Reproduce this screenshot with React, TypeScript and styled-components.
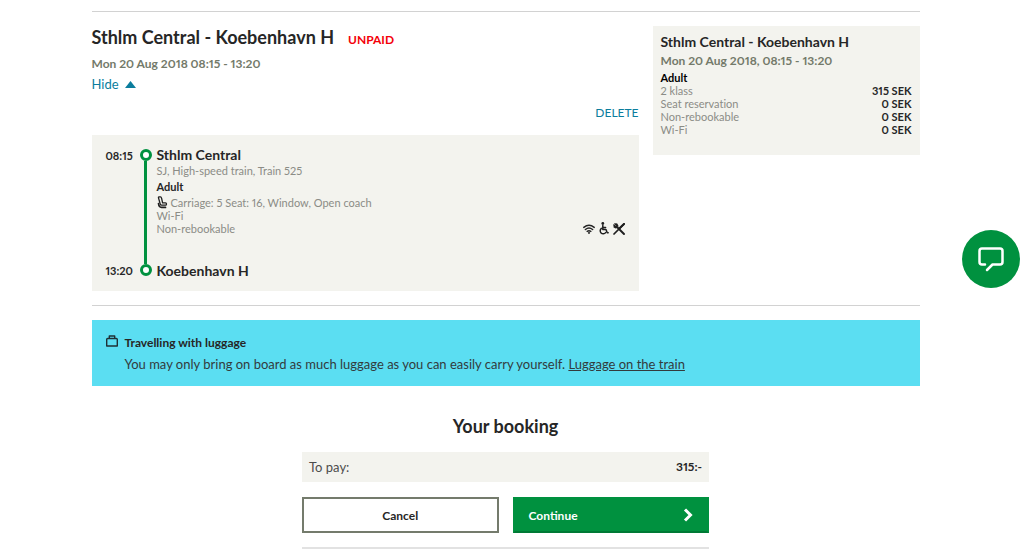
import React from 'react';
import styled, { createGlobalStyle } from 'styled-components';

const GlobalStyle = createGlobalStyle`
  *, *::before, *::after { box-sizing: border-box; }
  body {
    margin: 0;
    background: #fff;
    color: #262626;
    font-family: Lato, "Open Sans", sans-serif;
    font-size: 13px;
    line-height: 20px;
    font-variant-numeric: proportional-nums;
    font-variant-ligatures: none;
  }
  h1, h2, h3, p, dl, dd, dt { margin: 0; padding: 0; }
  button { font-family: inherit; cursor: pointer; }
`;

const Page = styled.div`
  padding: 11px 13px 0 0;
`;

const Container = styled.main`
  max-width: 828px;
  margin: 0 auto;
`;

const Rule = styled.hr<{ $soft?: boolean }>`
  height: ${(p) => (p.$soft ? 2 : 1)}px;
  margin: 0;
  border: 0;
  background: ${(p) => (p.$soft ? '#e2e2e2' : '#d2d2d2')};
`;

const Columns = styled.div`
  display: grid;
  grid-template-columns: minmax(0, 1fr) 267px;
  gap: 14px;
  align-items: start;
  padding: 14px 0;
`;

const TitleRow = styled.div`
  display: flex;
  align-items: baseline;
  gap: 14px;
  margin-bottom: 4px;
`;

const Title = styled.h1`
  font-size: 18px;
  line-height: 22px;
  font-weight: 700;
`;

const Unpaid = styled.strong`
  color: #f40009;
  font-size: 12px;
  font-weight: 700;
`;

const DateLine = styled.p`
  color: #737a6a;
  font-size: 12px;
  font-weight: 700;
`;

const LinkButton = styled.button<{ $small?: boolean }>`
  display: flex;
  align-items: center;
  gap: 6px;
  padding: 0;
  border: 0;
  background: none;
  color: #0b7d9d;
  font-size: ${(p) => (p.$small ? 12 : 13)}px;
  line-height: 20px;
`;

const Actions = styled.div`
  display: flex;
  justify-content: flex-end;
  margin: 9px 0 12px;
`;

const Journey = styled.section`
  display: grid;
  grid-template-columns: 29px 12px minmax(0, 1fr);
  column-gap: 5px;
  padding: 10px 14px 11px;
  background: #f3f3ee;
`;

const Time = styled.time<{ $end?: boolean }>`
  align-self: ${(p) => (p.$end ? 'end' : 'start')};
  grid-column: 1;
  grid-row: 1;
  padding-top: 2px;
  font-size: 11px;
  line-height: 18px;
  font-weight: 700;
`;

const Track = styled.div`
  display: flex;
  flex-direction: column;
  align-items: center;
  grid-column: 2;
  grid-row: 1;
  padding: 4px 0;
`;

const Stop = styled.span`
  width: 12px;
  height: 12px;
  border: 3px solid #00913f;
  border-radius: 50%;
  background: #fff;
`;

const Line = styled.span`
  flex: 1;
  width: 3px;
  background: #00913f;
`;

const Stops = styled.div`
  grid-column: 3;
  grid-row: 1;
`;

const Station = styled.h2`
  font-size: 14px;
  line-height: 19px;
  font-weight: 700;
`;

const Small = styled.p`
  display: flex;
  align-items: center;
  gap: 3px;
  color: #8b8c86;
  font-size: 11px;
  line-height: 13px;
`;

const Traveller = styled.h3`
  margin: 3px 0;
  font-size: 11px;
  line-height: 13px;
  font-weight: 700;
`;

const LastRow = styled.div`
  display: flex;
  justify-content: space-between;
  margin-bottom: 26px;
`;

const Facilities = styled.div`
  display: flex;
  align-items: center;
  gap: 4px;
  height: 13px;
`;

const Summary = styled.aside`
  padding: 6px 8px 19px;
  background: #f3f3ee;
`;

const PriceRow = styled.div`
  display: flex;
  justify-content: space-between;
  font-size: 11px;
  line-height: 13px;
  dt { color: #8b8c86; }
  dd { font-weight: 700; }
`;

const Passenger = styled.h3`
  color: #000;
  font-size: 11px;
  line-height: 13px;
`;

const Notice = styled.section`
  display: flex;
  gap: 7px;
  margin-top: 14px;
  padding: 13px 14px 12px;
  background: #5bdef2;
  > svg { margin-top: 2px; }
`;

const NoticeTitle = styled.h2`
  font-size: 12px;
  line-height: 20px;
`;

const NoticeText = styled.p`
  margin-top: 1px;
  color: #333b3d;
  a { color: inherit; }
`;

const Booking = styled.section`
  max-width: 407px;
  margin: 28px auto 0;
`;

const BookingTitle = styled.h2`
  font-size: 18px;
  line-height: 24px;
  text-align: center;
`;

const Total = styled.div`
  display: flex;
  justify-content: space-between;
  margin: 14px 0 15px;
  padding: 5px 7px;
  background: #f3f3ee;
  color: #4c4c4c;
  strong { color: #262626; font-size: 12px; }
`;

const Buttons = styled.div`
  display: grid;
  grid-template-columns: 1fr 1fr;
  gap: 14px;
  margin-bottom: 14px;
`;

const Button = styled.button<{ $primary?: boolean }>`
  display: flex;
  align-items: center;
  justify-content: ${(p) => (p.$primary ? 'space-between' : 'center')};
  height: 36px;
  padding: 0 14px;
  border: 2px solid ${(p) => (p.$primary ? '#00913f' : '#747b6c')};
  border-bottom-color: ${(p) => (p.$primary ? '#007a35' : '#747b6c')};
  background: ${(p) => (p.$primary ? '#00913f' : '#fff')};
  color: ${(p) => (p.$primary ? '#fff' : '#262626')};
  font-size: 12px;
  font-weight: 700;
`;

const Chat = styled.button`
  position: fixed;
  top: 230px;
  right: 4px;
  display: grid;
  place-items: center;
  width: 58px;
  height: 58px;
  padding: 0;
  border: 0;
  border-radius: 50%;
  background: #00913f;
`;

const prices = [
  ['2 klass', '315 SEK'],
  ['Seat reservation', '0 SEK'],
  ['Non-rebookable', '0 SEK'],
  ['Wi-Fi', '0 SEK'],
];

const SeatIcon = () => (
  <svg width="11" height="13" viewBox="0 0 11 13" fill="none" stroke="#1f1f1f" strokeLinecap="round" strokeLinejoin="round">
    <path d="M2 .9h1.500q.8 0 1 1L5.600 6.800H8.500q1 0 1 1.200t-1 1.200H4.500Q3.500 9.200 3.200 8L1.500 1.800Q1.300 1 2 .9z" strokeWidth="1.3" />
    <path d="M1.500 7.500Q2 11.400 4.500 11.400H8.500" strokeWidth="1.700" />
  </svg>
);

const WifiIcon = () => (
  <svg width="12" height="10" viewBox="0 0 12 10" fill="none" stroke="#262626" strokeLinecap="round" strokeWidth="1.5">
    <path d="M.8 3.4Q6-.8 11.2 3.4M2.4 5.500Q6 2.700 9.6 5.500M4.200 7.400Q6 6.200 7.800 7.400" />
    <circle cx="6" cy="8.9" r=".3" />
  </svg>
);

const WheelchairIcon = () => (
  <svg width="10" height="13" viewBox="0 0 10 13" fill="none" stroke="#1f1f1f" strokeWidth="1.5" strokeLinecap="round" strokeLinejoin="round">
    <circle cx="3.8" cy="1.500" r="1.400" fill="#1f1f1f" stroke="none" />
    <path d="M3.8 3.600v4h3.200l1.200 3.200h1M4 5.400h2.600" />
    <path d="M2.400 6.400a3 3 0 1 0 4.200 4.200" />
  </svg>
);

const DiningIcon = () => (
  <svg width="12" height="12" viewBox="0 0 12 12" fill="none" stroke="#1f1f1f" strokeLinecap="round">
    <path d="M3.500 3.500l7.500 7.500" strokeWidth="1.900" />
    <path d="M.8 2l1.800 1.800M2 .8l1.800 1.800M1 3.8l2 1M3.8 1l1 2" strokeWidth="1.4" />
    <path d="M11 1 1 11" strokeWidth="1.7" />
    <path d="M11 .9 6.8 5.100" strokeWidth="2.100" />
  </svg>
);

const BagIcon = () => (
  <svg width="12" height="12" viewBox="0 0 12 12" fill="none" stroke="#1f3135" strokeWidth="1.4" strokeLinejoin="round">
    <path d="M.7 4.500q0-1 1-1h8.600q1 0 1 1v6.500H.7zM3.300 3.500V1h5.400v2.500" />
  </svg>
);

export default function App() {
  return (
    <>
      <GlobalStyle />
      <Page>
        <Container>
          <Rule />
          <Columns>
            <div>
              <TitleRow>
                <Title>Sthlm Central - Koebenhavn H</Title>
                <Unpaid>UNPAID</Unpaid>
              </TitleRow>
              <DateLine>Mon 20 Aug 2018 08:15 - 13:20</DateLine>
              <LinkButton type="button">
                Hide
                <svg width="11" height="7" viewBox="0 0 11 7" fill="#0b7d9d"><path d="M0 7 5.500 0 11 7z" /></svg>
              </LinkButton>
              <Actions>
                <LinkButton type="button" $small>DELETE</LinkButton>
              </Actions>
              <Journey>
                <Time>08:15</Time>
                <Time $end>13:20</Time>
                <Track><Stop /><Line /><Stop /></Track>
                <Stops>
                  <Station>Sthlm Central</Station>
                  <Small>SJ, High-speed train, Train 525</Small>
                  <Traveller>Adult</Traveller>
                  <Small><SeatIcon />Carriage: 5 Seat: 16, Window, Open coach</Small>
                  <Small>Wi-Fi</Small>
                  <LastRow>
                    <Small>Non-rebookable</Small>
                    <Facilities><WifiIcon /><WheelchairIcon /><DiningIcon /></Facilities>
                  </LastRow>
                  <Station>Koebenhavn H</Station>
                </Stops>
              </Journey>
            </div>
            <Summary>
              <Station>Sthlm Central - Koebenhavn H</Station>
              <DateLine>Mon 20 Aug 2018, 08:15 - 13:20</DateLine>
              <Passenger>Adult</Passenger>
              <dl>
                {prices.map(([label, price]) => (
                  <PriceRow key={label}><dt>{label}</dt><dd>{price}</dd></PriceRow>
                ))}
              </dl>
            </Summary>
          </Columns>
          <Rule />
          <Notice>
            <BagIcon />
            <div>
              <NoticeTitle>Travelling with luggage</NoticeTitle>
              <NoticeText>
                You may only bring on board as much luggage as you can easily carry yourself. <a href="#luggage">Luggage on the train</a>
              </NoticeText>
            </div>
          </Notice>
          <Booking>
            <BookingTitle>Your booking</BookingTitle>
            <Total><span>To pay:</span><strong>315:-</strong></Total>
            <Buttons>
              <Button type="button">Cancel</Button>
              <Button type="button" $primary>
                Continue
                <svg width="10" height="14" viewBox="0 0 10 14" fill="none" stroke="#fff" strokeWidth="3"><path d="M2 1.500 7.500 7 2 12.500" /></svg>
              </Button>
            </Buttons>
            <Rule $soft />
          </Booking>
        </Container>
      </Page>
      <Chat type="button" aria-label="Chat">
        <svg width="26" height="26" viewBox="0 0 26 26" fill="none" stroke="#fff" strokeWidth="2.500" strokeLinecap="round" strokeLinejoin="round">
          <path d="M7 18.500H4q-2.500 0-2.500-2.500V5q0-2.500 2.500-2.500h18q2.500 0 2.500 2.500v11q0 2.500-2.500 2.500h-7.500L9 24" />
        </svg>
      </Chat>
    </>
  );
}
